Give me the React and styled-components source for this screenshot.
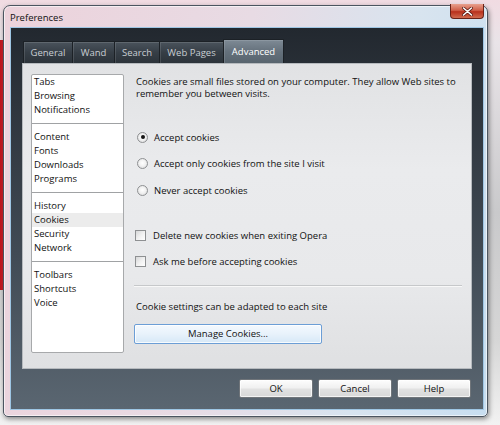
import React from 'react'
import styled, { createGlobalStyle } from 'styled-components'

const GlobalStyle = createGlobalStyle`
  html, body {
    margin: 0;
    padding: 0;
  }
  body {
    font-family: "Open Sans", "Noto Sans", "DejaVu Sans", sans-serif;
    font-size: 9.5px;
    color: #111;
  }
`

const groups = [
  ['Tabs', 'Browsing', 'Notifications'],
  ['Content', 'Fonts', 'Downloads', 'Programs'],
  ['History', 'Cookies', 'Security', 'Network'],
  ['Toolbars', 'Shortcuts', 'Voice'],
]

const tabs = [
  { label: 'General', width: 50 },
  { label: 'Wand', width: 43 },
  { label: 'Search', width: 46 },
  { label: 'Web Pages', width: 65 },
  { label: 'Advanced', width: 61, active: true },
]

const radios = [
  { label: 'Accept cookies', checked: true },
  { label: 'Accept only cookies from the site I visit' },
  { label: 'Never accept cookies' },
]

const Close = () => (
  <svg width="11" height="9" viewBox="0 0 11 9">
    <path d="M1.5 1 L9.5 8 M9.5 1 L1.5 8" stroke="#5a1a14" strokeWidth="3" strokeLinecap="round" />
    <path d="M1.5 1 L9.5 8 M9.5 1 L1.5 8" stroke="#fff" strokeWidth="1.6" strokeLinecap="round" />
  </svg>
)

const App = () => {
  return (
    <>
      <GlobalStyle />
      <Desktop>
        <Window>
          <TitleBar>
            <Title>Preferences</Title>
            <CloseButton aria-label="Close"><Close /></CloseButton>
          </TitleBar>
          <Client>
            <TabBar>
              {tabs.map((t) => (
                <Tab key={t.label} active={t.active} $w={t.width}>{t.label}</Tab>
              ))}
            </TabBar>
            <Panel>
              <Sidebar>
                {groups.map((g, i) => (
                  <Group key={i} first={i === 0}>
                    {g.map((item) => (
                      <Item key={item} selected={item === 'Cookies'}>{item}</Item>
                    ))}
                  </Group>
                ))}
              </Sidebar>
              <Content>
                <Description>
                  Cookies are small files stored on your computer. They allow Web sites to
                  <br />
                  remember you between visits.
                </Description>
                <OptionList>
                  {radios.map((r) => (
                    <Option key={r.label}>
                      <Radio checked={r.checked} />
                      {r.label}
                    </Option>
                  ))}
                </OptionList>
                <OptionList>
                  <Option><Check />Delete new cookies when exiting Opera</Option>
                  <Option><Check />Ask me before accepting cookies</Option>
                </OptionList>
                <Separator />
                <Note>Cookie settings can be adapted to each site</Note>
                <ManageButton>Manage Cookies...</ManageButton>
              </Content>
            </Panel>
            <ButtonRow>
              <DialogButton>OK</DialogButton>
              <DialogButton>Cancel</DialogButton>
              <DialogButton>Help</DialogButton>
            </ButtonRow>
          </Client>
        </Window>
      </Desktop>
    </>
  )
}

const Desktop = styled.div`
  width: 500px;
  height: 425px;
  box-sizing: border-box;
  padding: 5px 0 0 3px;
  overflow: hidden;
  background:
    linear-gradient(to right, #c2121c 0, #d0242c 3px, transparent 3px) 0 40px / 100% 250px no-repeat,
    linear-gradient(to bottom, #f1dbe2 0%, #e9e4e8 10%, #c9c9cb 50%, #d6d6d6 80%, #f2f2f2 100%);
`

const Window = styled.div`
  width: 485px;
  height: 412px;
  box-sizing: border-box;
  border: 1px solid #4b5560;
  border-radius: 7px 7px 5px 5px;
  display: flex;
  flex-direction: column;
  background: linear-gradient(100deg, #ecd2db 0%, #e8dbe4 45%, #d8e4ef 75%, #c8def0 100%);
  box-shadow: 1px 2px 5px rgba(0, 0, 0, 0.45), inset 0 0 0 1px rgba(255, 255, 255, 0.6);
`

const TitleBar = styled.div`
  height: 21px;
  display: flex;
  align-items: center;
  justify-content: space-between;
  padding-left: 6px;
`

const Title = styled.span`
  font-size: 9.5px;
  color: #101010;
  margin-top: 1px;
`

const CloseButton = styled.button`
  align-self: flex-start;
  margin: -2px 3px 0 0;
  width: 34px;
  height: 15px;
  padding: 0;
  border: 1px solid #6a2218;
  border-top: none;
  border-radius: 0 0 4px 4px;
  background: linear-gradient(to bottom, #e8a08e 0%, #d0604a 45%, #b8301c 55%, #d06a4e 100%);
  display: flex;
  align-items: center;
  justify-content: center;
`

const Client = styled.div`
  flex: 1;
  margin: 0 3px 6px 6px;
  border: 1px solid #9ec6e4;
  box-sizing: border-box;
  padding: 11px 11px 0 11px;
  display: flex;
  flex-direction: column;
  background: linear-gradient(to bottom, #22282f 0%, #2e353d 20%, #414b55 60%, #5a6671 100%);
`

const TabBar = styled.div`
  display: flex;
  align-items: flex-end;
  height: 24px;
  padding-left: 1px;
`

const Tab = styled.div`
  width: ${(p) => p.$w}px;
  height: ${(p) => (p.active ? '24px' : '22px')};
  box-sizing: border-box;
  display: flex;
  align-items: center;
  justify-content: center;
  font-size: 9.5px;
  color: ${(p) => (p.active ? '#ffffff' : '#c9ced3')};
  border: 1px solid #1c2126;
  border-bottom: none;
  margin-right: -1px;
  background: ${(p) =>
    p.active
      ? 'linear-gradient(to bottom, #7e8a95 0%, #65717c 50%, #58646e 100%)'
      : 'linear-gradient(to bottom, #4a535c 0%, #363e46 50%, #2c333a 100%)'};
  box-shadow: inset 1px 1px 0 rgba(255, 255, 255, 0.12);
`

const Panel = styled.div`
  height: 306px;
  box-sizing: border-box;
  padding: 10px 8px 0 8px;
  display: flex;
  gap: 10px;
  background: linear-gradient(to bottom, #e1e2e4 0%, #eaebed 35%, #e8e9eb 70%, #dfe0e2 100%);
  border: 1px solid #b6babe;
`

const Sidebar = styled.div`
  width: 93px;
  height: 279px;
  box-sizing: border-box;
  background: #ffffff;
  border: 1px solid #a7a9ab;
  border-radius: 2px;
  display: flex;
  flex-direction: column;
`

const Group = styled.div`
  padding: ${(p) => (p.first ? '0' : '6px')} 0 6px;
  border-bottom: 1px solid #a0a2a4;
  &:last-child {
    border-bottom: none;
  }
`

const Item = styled.div`
  height: 14px;
  line-height: 14px;
  padding-left: 2px;
  font-size: 9.5px;
  background: ${(p) => (p.selected ? '#ececec' : 'transparent')};
`

const Content = styled.div`
  flex: 1;
  padding: 2px 0 0 0;
  display: flex;
  flex-direction: column;
`

const Description = styled.p`
  margin: 0 0 0 2px;
  font-size: 9.5px;
  line-height: 12px;
  white-space: nowrap;
`

const OptionList = styled.div`
  margin-top: 29px;
  display: flex;
  flex-direction: column;
  gap: 10.5px;
  padding-left: 1px;
`

const Option = styled.label`
  height: 16px;
  display: flex;
  align-items: center;
  gap: 6px;
  font-size: 9.5px;
  white-space: nowrap;
`

const Radio = styled.span`
  width: 11px;
  height: 11px;
  box-sizing: border-box;
  border-radius: 50%;
  border: 1px solid #8f9193;
  background: radial-gradient(circle at 50% 45%, #ffffff 0%, #f2f2f2 45%, #d2d3d4 100%);
  margin-left: 2px;
  display: flex;
  align-items: center;
  justify-content: center;
  &::after {
    content: '';
    width: 4px;
    height: 4px;
    border-radius: 50%;
    background: ${(p) => (p.checked ? '#151515' : 'transparent')};
  }
`

const Check = styled.span`
  width: 11px;
  height: 11px;
  box-sizing: border-box;
  border: 1px solid #8e9092;
  background: linear-gradient(135deg, #d6d7d8 0%, #f0f0f0 50%, #ffffff 100%);
  margin-right: 1px;
`

const Separator = styled.hr`
  margin: 15px 1px 0 0;
  border: none;
  border-top: 1px solid #c6c8ca;
  border-bottom: 1px solid #f8f8f8;
`

const Note = styled.div`
  margin: 14px 0 0 2px;
  font-size: 9.5px;
  line-height: 12px;
`

const ManageButton = styled.button`
  margin-top: 11px;
  width: 188px;
  height: 20px;
  font-family: inherit;
  font-size: 9.5px;
  color: #111;
  border: 1px solid #6c9ed6;
  border-radius: 2px;
  background: linear-gradient(to bottom, #f4f9fe 0%, #e8f2fb 50%, #d6e8f7 100%);
  box-shadow: inset 0 0 0 1px rgba(255, 255, 255, 0.8);
`

const ButtonRow = styled.div`
  margin-top: 10px;
  display: flex;
  justify-content: flex-end;
  gap: 5px;
  padding-right: 1px;
`

const DialogButton = styled.button`
  width: 74px;
  height: 19px;
  font-family: inherit;
  font-size: 9.5px;
  color: #111;
  border: 1px solid #70757a;
  border-radius: 2px;
  background: linear-gradient(to bottom, #fdfdfd 0%, #f0f0f0 48%, #e2e2e2 52%, #d8d8d8 100%);
  box-shadow: inset 0 0 0 1px rgba(255, 255, 255, 0.7);
`

export default App
